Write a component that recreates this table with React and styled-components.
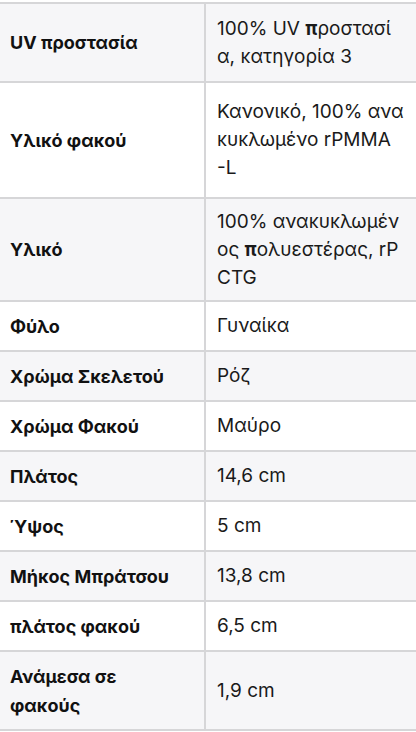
import React from 'react';
import styled, { createGlobalStyle } from 'styled-components';

const GlobalStyle = createGlobalStyle`
  html, body {
    margin: 0;
    padding: 0;
    background: #ffffff;
  }
  body {
    font-family: Inter, "Open Sans", "Noto Sans", sans-serif;
    overflow: hidden;
  }
`;

const Page = styled.div`
  width: 416px;
  padding-top: 2px;
`;

const Table = styled.table`
  width: 100%;
  border-collapse: collapse;
  table-layout: fixed;
  border-top: 2px solid #d6d6d8;
`;

const Row = styled.tr`
  background: ${(props) => (props.striped ? '#f6f6f8' : '#ffffff')};
  border-bottom: 2px solid #d6d6d8;
`;

const Label = styled.th`
  width: 205px;
  height: ${(props) => props.h}px;
  box-sizing: border-box;
  padding: 0 10px;
  text-align: left;
  vertical-align: middle;
  font-size: 18px;
  font-weight: 700;
  line-height: 29px;
  color: #111111;
  border-right: 2px solid #d6d6d8;
`;

const Value = styled.td`
  padding: 0 10px 0 11px;
  vertical-align: middle;
  font-size: 19px;
  font-weight: 400;
  line-height: 28px;
  color: #1a1a1a;
  white-space: nowrap;
`;

const Strong = styled.span`
  font-weight: 700;
`;

const rows = [
  { label: 'UV προστασία', h: 79, value: [<>100% UV <Strong>π</Strong>ροστασί</>, 'α, κατηγορία 3'] },
  { label: 'Υλικό φακού', h: 116, value: ['Κανονικό, 100% ανα', 'κυκλωμένο rPMMA', '-L'] },
  { label: 'Υλικό', h: 103, value: ['100% ανακυκλωμέν', <>ος <Strong>π</Strong>ολυεστέρας, rP</>, 'CTG'] },
  { label: 'Φύλο', h: 50, value: ['Γυναίκα'] },
  { label: 'Χρώμα Σκελετού', h: 50, value: ['Ρόζ'] },
  { label: 'Χρώμα Φακού', h: 50, value: ['Μαύρο'] },
  { label: 'Πλάτος', h: 50, value: ['14,6 cm'] },
  { label: 'Ύψος', h: 50, value: ['5 cm'] },
  { label: 'Μήκος Μπράτσου', h: 50, value: ['13,8 cm'] },
  { label: 'πλάτος φακού', h: 50, value: ['6,5 cm'] },
  { label: <>Ανάμεσα σε<br />φακούς</>, h: 79, value: ['1,9 cm'] },
];

export default function App() {
  return (
    <Page>
      <GlobalStyle />
      <Table>
        <tbody>
          {rows.map((row, i) => (
            <Row key={i} striped={i % 2 === 0}>
              <Label h={row.h}>{row.label}</Label>
              <Value>
                {row.value.map((line, j) => (
                  <React.Fragment key={j}>
                    {j > 0 && <br />}
                    {line}
                  </React.Fragment>
                ))}
              </Value>
            </Row>
          ))}
        </tbody>
      </Table>
    </Page>
  );
}
